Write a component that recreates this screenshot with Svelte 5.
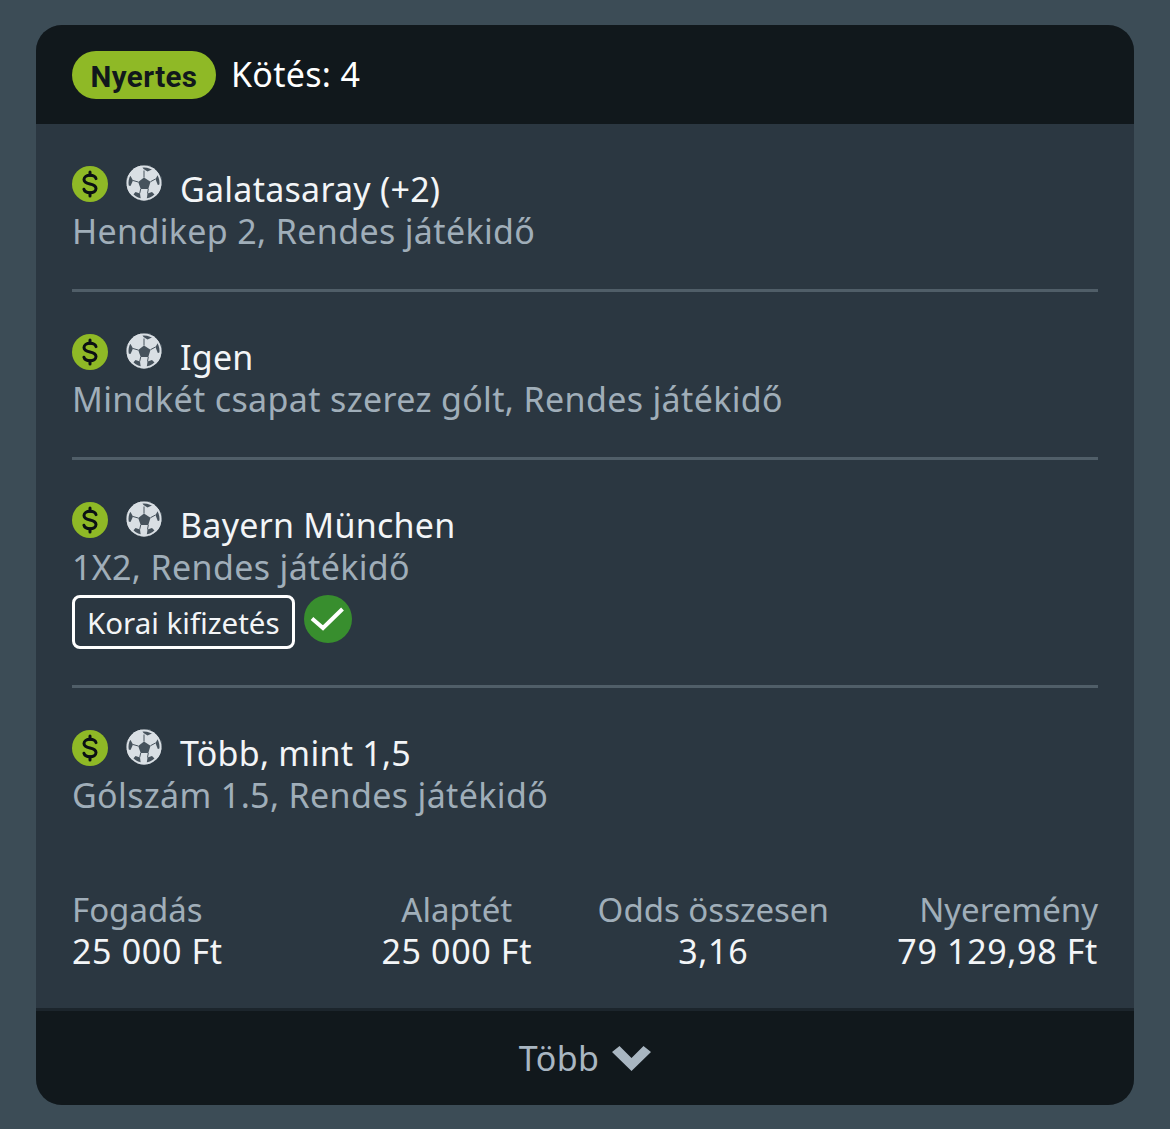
<script lang="ts">
	const bets = [
		{ title: 'Galatasaray (+2)', market: 'Hendikep 2, Rendes játékidő', cashout: false },
		{ title: 'Igen', market: 'Mindkét csapat szerez gólt, Rendes játékidő', cashout: false },
		{ title: 'Bayern München', market: '1X2, Rendes játékidő', cashout: true },
		{ title: 'Több, mint 1,5', market: 'Gólszám 1.5, Rendes játékidő', cashout: false }
	];

	const stats = [
		{ label: 'Fogadás', value: '25 000 Ft' },
		{ label: 'Alaptét', value: '25 000 Ft' },
		{ label: 'Odds összesen', value: '3,16' },
		{ label: 'Nyeremény', value: '79 129,98 Ft' }
	];
</script>

<main class="page">
	<section class="card">
		<header class="card-header">
			<span class="badge">Nyertes</span>
			<span class="count">Kötés: 4</span>
		</header>

		<div class="card-body">
			{#each bets as bet, i}
				<article class="bet" class:tall={bet.cashout} class:last={i === bets.length - 1}>
					<div class="bet-main">
						<div class="icons">
							<svg viewBox="0 0 36 36" width="36" height="36" aria-hidden="true">
								<circle cx="18" cy="18" r="18" fill="#8fb926" />
								<path
									d="M24 12.600c-.6-2.200-3-3.400-6-3.400-3.400 0-6 1.700-6 4.300 0 2.800 2.500 3.700 6 4.500 3.500.8 6 1.800 6 4.600 0 2.600-2.600 4.200-6 4.200-3.100 0-5.500-1.300-6.100-3.600"
									fill="none"
									stroke="#0b1014"
									stroke-width="3"
									stroke-linecap="round"
								/>
								<path d="M18 6v3.200M18 26.800V30" stroke="#0b1014" stroke-width="3" stroke-linecap="round" />
							</svg>
							<svg class="ball" viewBox="0 0 36 36" width="36" height="36" aria-hidden="true">
								<circle cx="18" cy="18" r="17.500" fill="#d9dfe4" />
								<g fill="#46525c">
									<path d="M18 12.500l6.500 4.200-2.200 7.300h-7.600l-2.500-7z" />
									<path d="M15 0h9l3 4-5.500 2.500L17.500 4z" />
									<path d="M0 13l4.500-2 2.500 4.500-2.500 5.500-4.500-1z" />
									<path d="M36 12l-4-2.500-2.500 4.500 2.300 6 4.200-1z" />
									<path d="M6 31l3.500-4 4.500 1.500 1 7.500z" />
									<path d="M30 31l-4-4-4.500 1.500-1 7.500z" />
								</g>
								<path
									d="M18 12.500V5.500M24.500 16.700l5-2.700M12.200 17l-5.200-1.500M14.700 24l-1 4.500M22.300 24l-.8 4.500"
									fill="none"
									stroke="#46525c"
									stroke-width="1"
								/>
								<circle cx="18" cy="18" r="16.500" fill="none" stroke="#d9dfe4" stroke-width="2" />
							</svg>
						</div>
						<span class="title">{bet.title}</span>
					</div>
					<div class="market">{bet.market}</div>
					{#if bet.cashout}
						<div class="cashout">
							<span class="cashout-tag">Korai kifizetés</span>
							<svg viewBox="0 0 48 48" width="48" height="48" aria-hidden="true">
								<circle cx="24" cy="24" r="24" fill="#388e2e" />
								<path d="M8 23.500l11 9.500L38.500 14" fill="none" stroke="#fff" stroke-width="4" />
							</svg>
						</div>
					{/if}
				</article>
			{/each}

			<div class="stats">
				{#each stats as stat}
					<div class="stat">
						<span class="stat-label">{stat.label}</span>
						<span class="stat-value">{stat.value}</span>
					</div>
				{/each}
			</div>
		</div>

		<footer class="card-footer">
			<span>Több</span>
			<svg viewBox="0 0 39 25" width="39" height="25" aria-hidden="true">
				<path d="M0 6L7.500 0 19.500 12 31.500 0 39 6 19.500 25z" fill="#a9b6c1" />
			</svg>
		</footer>
	</section>
</main>

<style>
	:global(body) {
		margin: 0;
		background: #3c4c56;
	}

	.page {
		height: 1129px;
		padding: 25px 36px 0;
		box-sizing: border-box;
		font-family: 'Noto Sans', 'Open Sans', sans-serif;
	}

	.card {
		height: 1080px;
		display: flex;
		flex-direction: column;
		border-radius: 26px;
		overflow: hidden;
		background: #2b3741;
	}

	.card-header {
		height: 99px;
		flex: none;
		display: flex;
		align-items: center;
		gap: 15px;
		padding: 0 36px;
		background: #11181c;
	}

	.badge {
		width: 144px;
		height: 48px;
		box-sizing: border-box;
		padding-top: 4px;
		display: flex;
		align-items: center;
		justify-content: center;
		border-radius: 24px;
		background: #8fb926;
		color: #11181c;
		font-family: 'Roboto', sans-serif;
		font-size: 29.500px;
		font-weight: 700;
		letter-spacing: 0.4px;
	}

	.count {
		color: #fff;
		font-size: 34px;
		letter-spacing: 0.3px;
		padding-bottom: 2px;
	}

	.card-body {
		flex: 1;
		padding: 0 36px;
	}

	.bet {
		height: 168px;
		box-sizing: border-box;
		padding-top: 42px;
		border-bottom: 3px solid #505e68;
	}

	.bet.tall {
		height: 228px;
	}

	.bet.last {
		height: 157px;
		border-bottom: none;
	}

	.bet-main {
		height: 45px;
		display: flex;
		align-items: flex-start;
	}

	.icons {
		display: flex;
		gap: 18px;
		width: 108px;
	}

	.ball {
		margin-top: -1px;
	}

	.title {
		color: #f3f5f7;
		font-size: 34px;
		line-height: 46px;
		letter-spacing: 0.25px;
	}

	.market {
		color: #a0aeb9;
		font-size: 34px;
		line-height: 40px;
		letter-spacing: 0.35px;
	}

	.cashout {
		display: flex;
		align-items: flex-start;
		gap: 9px;
		margin-top: 8px;
	}

	.cashout-tag {
		height: 54px;
		box-sizing: border-box;
		display: flex;
		align-items: center;
		padding: 0 12px;
		border: 3px solid #fff;
		border-radius: 8px;
		color: #f3f5f7;
		font-size: 29.500px;
	}

	.stats {
		display: grid;
		grid-template-columns: repeat(4, 1fr);
		padding-top: 44px;
	}

	.stat {
		display: flex;
		flex-direction: column;
		align-items: center;
		white-space: nowrap;
	}

	.stat:first-child {
		align-items: flex-start;
	}

	.stat:last-child {
		align-items: flex-end;
	}

	.stat-label {
		color: #a0aeb9;
		font-size: 33px;
		line-height: 42px;
	}

	.stat-value {
		color: #f3f5f7;
		font-size: 34px;
		line-height: 40px;
		letter-spacing: 0.65px;
	}

	.card-footer {
		height: 97px;
		box-sizing: border-box;
		flex: none;
		display: flex;
		align-items: center;
		justify-content: center;
		gap: 13px;
		border-top: 3px solid #1c252c;
		background: #11181c;
		color: #a9b6c1;
		font-size: 34px;
		letter-spacing: 0.4px;
	}
</style>
